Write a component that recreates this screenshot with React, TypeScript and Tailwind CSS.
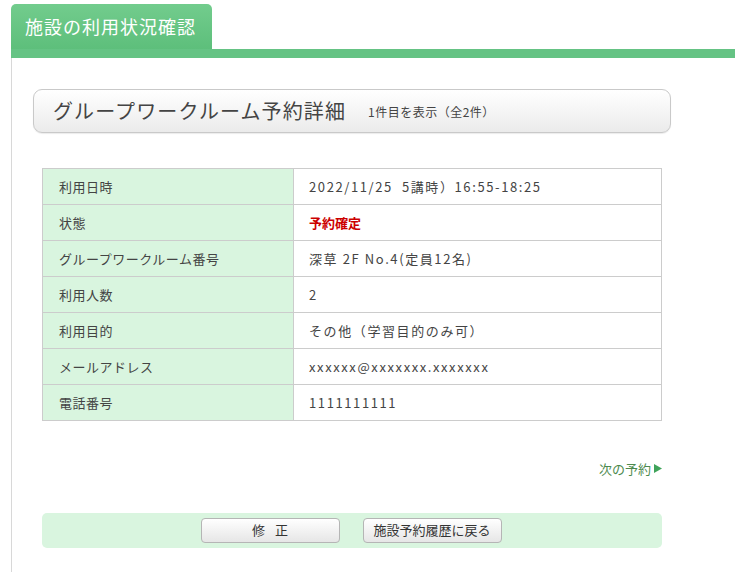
import React from "react";

const rows: { label: string; value: string; red?: boolean }[] = [
  { label: "利用日時", value: "2022/11/25  5講時）16:55-18:25" },
  { label: "状態", value: "予約確定", red: true },
  { label: "グループワークルーム番号", value: "深草 2F No.4(定員12名)" },
  { label: "利用人数", value: "2" },
  { label: "利用目的", value: "その他（学習目的のみ可）" },
  { label: "メールアドレス", value: "xxxxxx@xxxxxxx.xxxxxxx" },
  { label: "電話番号", value: "1111111111" },
];

const App = () => {
  return (
    <div
      className="w-[735px] h-[572px] bg-white overflow-hidden text-[#333]"
      style={{ fontFamily: '"Noto Sans CJK JP", "Noto Sans", sans-serif' }}
    >
      <div className="pl-[11px] pt-[4px]">
        <div className="w-[201px] h-[45px] rounded-t-[5px] bg-gradient-to-b from-[#72cc8d] to-[#5dbf7b] flex items-center pl-[14px] text-white text-[18px] tracking-[1px]">
          施設の利用状況確認
        </div>
      </div>
      <div className="h-[9px] ml-[11px] bg-[#65c384]" />
      <div className="ml-[11px] border-l border-[#d8d8d8] h-[514px] pt-[31px]">
        <div className="ml-[21px] w-[638px] h-[44px] rounded-[9px] border border-[#c9c9c9] bg-gradient-to-b from-white to-[#ebebeb] shadow-[0_1px_1px_rgba(0,0,0,0.08)] flex items-center pl-[19px]">
          <span className="text-[20px] text-[#444] tracking-[1.1px]">グループワークルーム予約詳細</span>
          <span className="ml-[22px] text-[12px] text-[#444] mt-[2px] tracking-[0.5px]">1件目を表示（全2件）</span>
        </div>
        <table className="ml-[30px] mt-[35px] w-[620px] border-collapse text-[13px]">
          <tbody>
            {rows.map((r) => (
              <tr key={r.label} className="h-[36px]">
                <td className="w-[251px] border border-[#cccccc] bg-[#d9f5df] pl-[16px] text-[#444] tracking-[0.5px]">{r.label}</td>
                <td
                  className={
                    r.red
                      ? "border border-[#cccccc] pl-[15px] text-[#cc0000] font-bold"
                      : "border border-[#cccccc] pl-[15px] text-[#444] tracking-[1.6px] whitespace-pre"
                  }
                >
                  {r.value}
                </td>
              </tr>
            ))}
          </tbody>
        </table>
        <div className="ml-[30px] w-[621px] flex justify-end mt-[38px]">
          <a className="text-[13px] text-[#4d8a4d] flex items-center gap-[2px]">
            次の予約
            <svg width="10" height="11" viewBox="0 0 10 11">
              <path d="M1 1 L9 5.5 L1 10 Z" fill="#3fa35a" />
            </svg>
          </a>
        </div>
        <div className="ml-[30px] mt-[34px] w-[620px] h-[35px] rounded-[5px] bg-[#d9f5df] flex items-center justify-center gap-[23px] pr-[2px]">
          <button className="w-[139px] h-[25px] rounded-[4px] border border-[#b5b5b5] bg-gradient-to-b from-white to-[#e6e6e6] text-[13px] text-[#333] tracking-[10px] pl-[10px]">
            修正
          </button>
          <button className="w-[139px] h-[25px] rounded-[4px] border border-[#b5b5b5] bg-gradient-to-b from-white to-[#e6e6e6] text-[13px] text-[#333]">
            施設予約履歴に戻る
          </button>
        </div>
      </div>
    </div>
  );
};

export default App;
